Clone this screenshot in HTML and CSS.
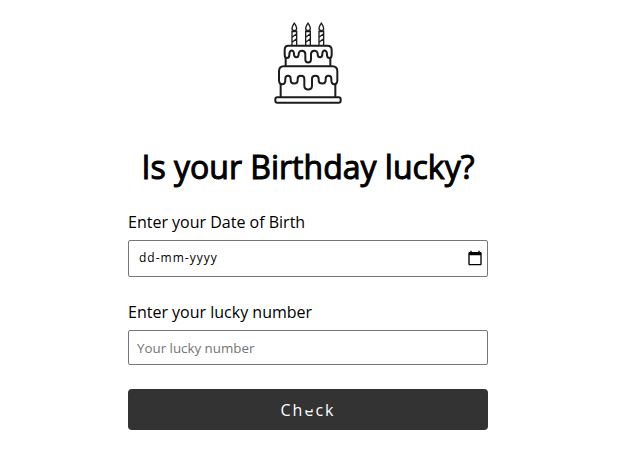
FILE: index.html
```html
<!DOCTYPE html>
<html lang="en">
<head>
<meta charset="utf-8">
<meta name="viewport" content="width=device-width, initial-scale=1">
<title>Is your Birthday lucky?</title>
<link rel="stylesheet" href="styles.css">
</head>
<body>
<main class="page">
  <svg class="cake" viewBox="0 0 240 282" aria-hidden="true">
    <defs>
      <g id="candle" stroke-width="4">
        <path d="M-7 37V79M7 37V79M-7 39H7M-6 55L6 46M-6 70L6 61"/>
        <path d="M0 13C-3 19-7 23-7 29Q-7 36 0 36Q7 36 7 29C7 23 3 19 0 13Z"/>
      </g>
    </defs>
    <use href="#candle" x="79" y="14"/>
    <use href="#candle" x="120" y="14"/>
    <use href="#candle" x="160" y="14"/>
    <path d="M61 95H178Q191 95 191 108V122C191 135 177 135 177 122C177 106 163 106 163 120C163 133 149 133 149 120C149 107 129 107 129 121V136C129 149 112 149 112 136V121C112 107 92 107 92 120C92 133 78 133 78 120C78 106 64 106 64 122C64 135 50 135 50 122V108Q50 95 61 95Z"/>
    <path d="M53 132V156M187 132V156"/>
    <path d="M47 157H193Q208 157 208 172V199C208 215 190 215 190 199V194C190 182 173 182 173 194V198C173 212 152 212 152 198V194C152 182 132 182 132 194V215C132 230 109 230 109 215V194C109 182 89 182 89 194V198C89 212 68 212 68 198V194C68 182 52 182 52 194V199C52 215 33 215 33 199V172Q33 157 47 157Z"/>
    <path d="M38 209V248M202 209V248"/>
    <rect x="22" y="250" width="196" height="16" rx="6"/>
  </svg>
  <h1 class="title">Is your Birthday lucky?</h1>
  <form class="form">
    <label class="label" for="birth">Enter your Date of Birth</label>
    <div class="field date-field">
      <input class="date-input" id="birth" type="text" placeholder="dd-mm-yyyy">
      <button class="picker" type="button" aria-label="Show date picker">
        <svg class="calendar" viewBox="0 0 24 24" aria-hidden="true"><path d="M20 3h-1V1h-2v2H7V1H5v2H4c-1.1 0-2 .9-2 2v16c0 1.100.9 2 2 2h16c1.100 0 2-.9 2-2V5c0-1.100-.9-2-2-2zm0 18H4V8h16v13z"/></svg>
      </button>
    </div>
    <label class="label" for="lucky">Enter your lucky number</label>
    <input class="field number-input" id="lucky" type="text" inputmode="numeric" placeholder="Your lucky number">
    <button class="submit" type="submit">Check</button>
  </form>
</main>
</body>
</html>
```
FILE: styles.css
```css
* {
  box-sizing: border-box;
}

body {
  margin: 0;
  background: #fff;
  color: #000;
  font: 16px/22px "Open Sans", sans-serif;
}

.page {
  display: flex;
  flex-direction: column;
  align-items: center;
  padding: 14px 26px 32px 24px;
}

.cake {
  width: 80px;
  height: 94px;
  fill: none;
  stroke: #1c1c1c;
  stroke-width: 6;
  stroke-linecap: round;
  stroke-linejoin: round;
}

.title {
  margin: 37px 0 22px;
  font-size: 32px;
  line-height: 44px;
  font-weight: 400;
  -webkit-text-stroke: 1px #000;
}

.form {
  display: flex;
  flex-direction: column;
  width: 100%;
  max-width: 360px;
}

.label {
  margin-bottom: 7px;
}

.field {
  margin-bottom: 24px;
  border: 1px solid #767676;
  border-radius: 2px;
  background: #fff;
}

.date-field {
  display: flex;
  align-items: center;
  height: 37px;
  padding: 0 4px 2px 10px;
}

.date-input,
.number-input {
  font-family: "Open Sans", sans-serif;
}

.date-input {
  flex: 1;
  min-width: 0;
  padding: 0;
  border: 0;
  outline: 0;
  background: none;
  font-size: 12px;
  letter-spacing: 1px;
}

.date-input::placeholder {
  color: #000;
}

.number-input {
  width: 100%;
  height: 35px;
  padding: 0 8px;
}

.number-input::placeholder {
  color: #757575;
}

.picker {
  display: flex;
  padding: 0;
  border: 0;
  background: none;
}

.calendar {
  width: 16px;
  height: 16px;
}

.submit {
  position: relative;
  height: 41px;
  border: 0;
  border-radius: 4px;
  background: #333;
  color: #fff;
  font: 16px/22px "Open Sans", sans-serif;
  letter-spacing: 2px;
}

/* Small dark spot over the middle of the caption */
.submit::after {
  content: "";
  position: absolute;
  top: 14px;
  left: calc(50% - 6px);
  width: 11px;
  height: 7px;
  border-radius: 0 0 4px 4px;
  background: #333;
}
```
